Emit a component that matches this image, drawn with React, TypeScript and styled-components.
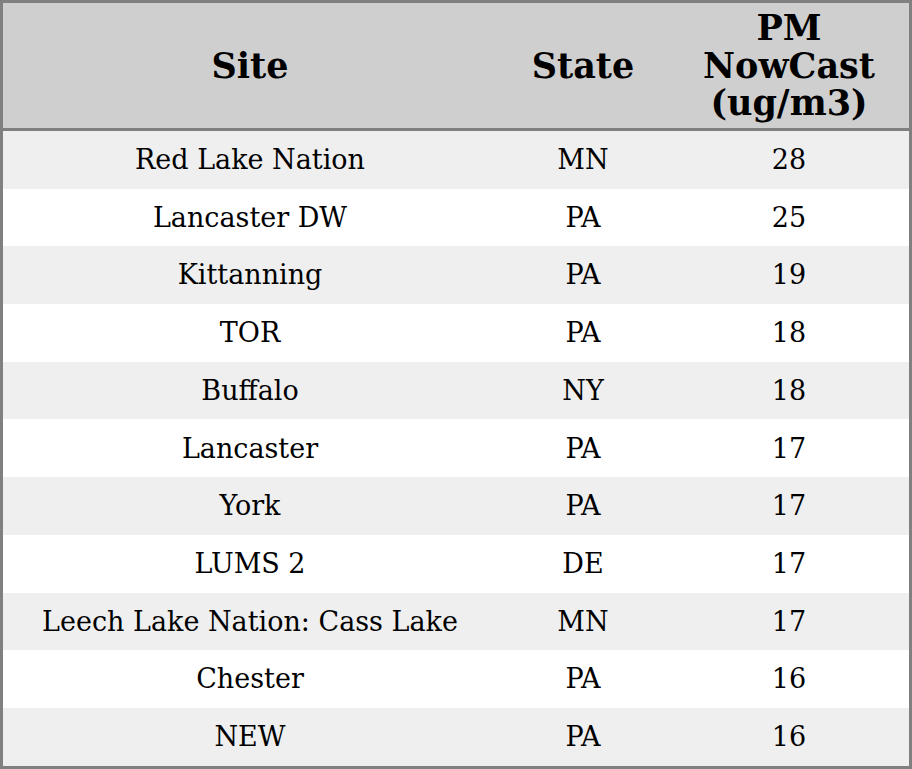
import React from 'react'
import styled, {createGlobalStyle} from 'styled-components'

const GlobalStyle = createGlobalStyle`
  html, body {
    margin: 0;
    padding: 0;
    background: #ffffff;
  }
  body {
    font-family: 'DejaVu Serif', 'Liberation Serif', serif;
    color: #000;
  }
`

const Table = styled.table`
  width: 912px;
  border-collapse: separate;
  border-spacing: 0;
  border: 3px solid #808080;
  table-layout: fixed;
`

const HeadCell = styled.th<{width: number}>`
  width: ${p => p.width}px;
  box-sizing: border-box;
  background: #cfcfcf;
  border-bottom: 3px solid #808080;
  font-size: 35px;
  font-weight: bold;
  line-height: 37.4px;
  padding: 6.4px 0 6.2px;
  text-align: center;
  vertical-align: middle;
`

const Row = styled.tr<{shaded: boolean}>`
  background: ${p => (p.shaded ? '#efefef' : '#ffffff')};
`

const Cell = styled.td`
  font-size: 27px;
  line-height: 31.4px;
  padding: 13.16px 0;
  text-align: center;
  white-space: nowrap;
`

const rows: [string, string, number][] = [
  ['Red Lake Nation', 'MN', 28],
  ['Lancaster DW', 'PA', 25],
  ['Kittanning', 'PA', 19],
  ['TOR', 'PA', 18],
  ['Buffalo', 'NY', 18],
  ['Lancaster', 'PA', 17],
  ['York', 'PA', 17],
  ['LUMS 2', 'DE', 17],
  ['Leech Lake Nation: Cass Lake', 'MN', 17],
  ['Chester', 'PA', 16],
  ['NEW', 'PA', 16],
]

export default function App() {
  return (
    <>
      <GlobalStyle />
      <Table>
        <thead>
          <tr>
            <HeadCell width={494}>Site</HeadCell>
            <HeadCell width={172}>State</HeadCell>
            <HeadCell width={240}>
              PM
              <br />
              NowCast
              <br />
              (ug/m3)
            </HeadCell>
          </tr>
        </thead>
        <tbody>
          {rows.map(([site, state, pm], i) => (
            <Row key={site} shaded={i % 2 === 0}>
              <Cell>{site}</Cell>
              <Cell>{state}</Cell>
              <Cell>{pm}</Cell>
            </Row>
          ))}
        </tbody>
      </Table>
    </>
  )
}
